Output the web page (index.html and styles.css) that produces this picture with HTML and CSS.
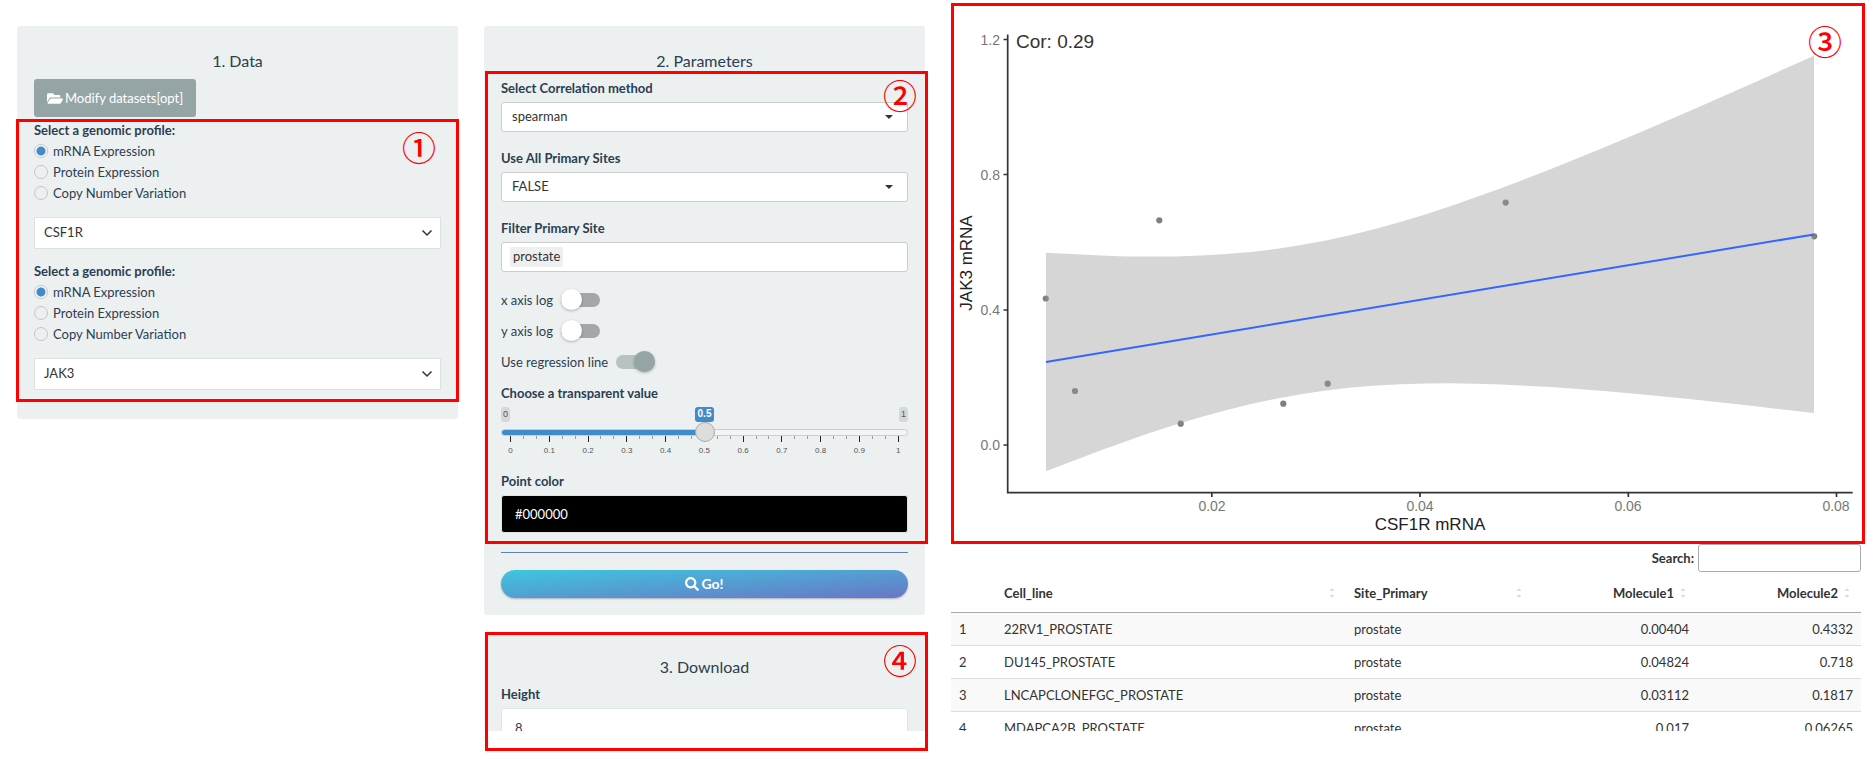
FILE: index.html
```html
<!DOCTYPE html>
<html lang="en">
<head>
<meta charset="utf-8">
<title>Correlation analysis</title>
<link rel="stylesheet" href="styles.css">
</head>
<body>
<main class="page">
  <div class="column">
    <section class="panel">
      <h2 class="panel-title">1. Data</h2>
      <button class="btn-modify" type="button">
        <svg width="16" height="13" viewBox="0 0 576 448" fill="currentColor" aria-hidden="true"><path d="M572.7 260.100L500.300 384.200A64 64 0 0 1 445 416H45.000c-18.500 0-30-20.100-20.700-36.100l72.400-124.100A64 64 0 0 1 152 224H552c18.500 0 30 20.100 20.700 36.100zM152 192h328v-48c0-26.500-21.500-48-48-48H272l-64-64H48C21.500 32 0 53.500 0 80v278l69-118.300C86.300 210.300 118 192 152 192z"/></svg>
        <span>Modify datasets[opt]</span>
      </button>
      <div class="marked profiles">
        <fieldset class="profile">
          <legend class="label">Select a genomic profile:</legend>
          <label class="radio"><input type="radio" name="profile1" checked><span>mRNA Expression</span></label>
          <label class="radio"><input type="radio" name="profile1"><span>Protein Expression</span></label>
          <label class="radio"><input type="radio" name="profile1"><span>Copy Number Variation</span></label>
        </fieldset>
        <div class="select gene">
          <select aria-label="First gene"><option>CSF1R</option></select>
          <svg class="chevron" width="12" height="8" viewBox="0 0 12 8" aria-hidden="true"><path d="M1.500 1.500L6 6l4.500-4.500" fill="none" stroke="#333" stroke-width="1.500"/></svg>
        </div>
        <fieldset class="profile">
          <legend class="label">Select a genomic profile:</legend>
          <label class="radio"><input type="radio" name="profile2" checked><span>mRNA Expression</span></label>
          <label class="radio"><input type="radio" name="profile2"><span>Protein Expression</span></label>
          <label class="radio"><input type="radio" name="profile2"><span>Copy Number Variation</span></label>
        </fieldset>
        <div class="select gene">
          <select aria-label="Second gene"><option>JAK3</option></select>
          <svg class="chevron" width="12" height="8" viewBox="0 0 12 8" aria-hidden="true"><path d="M1.500 1.500L6 6l4.500-4.500" fill="none" stroke="#333" stroke-width="1.500"/></svg>
        </div>
        <div class="frame frame-data"><span class="badge">①</span></div>
      </div>
    </section>
  </div>

  <div class="column">
    <section class="panel">
      <h2 class="panel-title">2. Parameters</h2>
      <div class="marked">
        <label class="label" for="method">Select Correlation method</label>
        <div class="select field">
          <select id="method"><option>spearman</option></select>
          <svg class="caret" width="8" height="4" viewBox="0 0 8 4" aria-hidden="true"><path d="M0 0h8L4 4z" fill="#333"/></svg>
        </div>
        <label class="label" for="all-sites">Use All Primary Sites</label>
        <div class="select field">
          <select id="all-sites"><option>FALSE</option></select>
          <svg class="caret" width="8" height="4" viewBox="0 0 8 4" aria-hidden="true"><path d="M0 0h8L4 4z" fill="#333"/></svg>
        </div>
        <label class="label" for="site">Filter Primary Site</label>
        <div class="tags"><span class="tag">prostate</span><input id="site" type="text"></div>
        <div class="switches">
          <label class="switch"><span>x axis log</span><input type="checkbox"></label>
          <label class="switch"><span>y axis log</span><input type="checkbox"></label>
          <label class="switch"><span>Use regression line</span><input type="checkbox" checked></label>
        </div>
        <label class="label" for="alpha">Choose a transparent value</label>
        <div class="slider">
          <div class="slider-values"><span>0</span><output class="current" for="alpha">0.5</output><span>1</span></div>
          <input id="alpha" type="range" min="0" max="1" step="0.1" value="0.5">
          <div class="ticks" aria-hidden="true">
            <i><b>0</b></i><i></i><i></i><i><b>0.1</b></i><i></i><i></i><i><b>0.2</b></i><i></i><i></i><i><b>0.3</b></i><i></i><i></i><i><b>0.4</b></i><i></i><i></i><i><b>0.5</b></i><i></i><i></i><i><b>0.6</b></i><i></i><i></i><i><b>0.7</b></i><i></i><i></i><i><b>0.8</b></i><i></i><i></i><i><b>0.9</b></i><i></i><i></i><i><b>1</b></i>
          </div>
        </div>
        <label class="label" for="color">Point color</label>
        <input class="color" id="color" type="text" value="#000000">
        <div class="frame frame-params"><span class="badge">②</span></div>
      </div>
      <hr class="rule">
      <button class="btn-go" type="button">
        <svg width="14" height="14" viewBox="0 0 512 512" fill="currentColor" aria-hidden="true"><path d="M505 442.700L405.300 343c-4.500-4.500-10.600-7-17-7H372c27.600-35.300 44-79.700 44-128C416 93.100 322.900 0 208 0S0 93.100 0 208s93.100 208 208 208c48.300 0 92.700-16.400 128-44v16.300c0 6.400 2.500 12.500 7 17l99.700 99.700c9.400 9.400 24.600 9.400 33.900 0l28.300-28.300c9.400-9.400 9.400-24.600.1-34zM208 336c-70.700 0-128-57.200-128-128 0-70.700 57.200-128 128-128 70.700 0 128 57.200 128 128 0 70.700-57.200 128-128 128z"/></svg>
        <span>Go!</span>
      </button>
    </section>
    <section class="panel marked">
      <h2 class="panel-title">3. Download</h2>
      <label class="label" for="height">Height</label>
      <input class="number" id="height" type="text" inputmode="numeric" value="8">
      <div class="frame frame-download"><span class="badge">④</span></div>
    </section>
  </div>

  <div class="column results">
    <div class="marked">
      <svg class="plot" viewBox="0 0 910 541" role="img" aria-label="Scatter plot of JAK3 mRNA against CSF1R mRNA">
        <g fill="#000" fill-opacity=".5">
          <circle cx="94.800" cy="298.500" r="3.100"/><circle cx="124" cy="391" r="3.100"/><circle cx="208.300" cy="220.300" r="3.100"/><circle cx="229.700" cy="423.700" r="3.100"/><circle cx="332.300" cy="403.700" r="3.100"/><circle cx="376.700" cy="383.700" r="3.100"/><circle cx="554.700" cy="202.500" r="3.100"/><circle cx="863.200" cy="236.300" r="3.100"/>
        </g>
        <path fill="#999" fill-opacity=".4" d="M95 252.800L150 255.600 175 256.400 200 256.600 225 256.400 250 255.600 275 254.100 300 251.900 325 248.900 350 245 375 240.400 400 235 425 228.800 450 221.800 475 214.200 500 206.100 550 188.300 600 169.100 650 148.800 700 127.800 750 106.100 800 84 863 55.700V413.100L800 405.800 750 400.300 700 395.200 650 390.800 600 387.100 550 384.500 525 383.700 500 383.300 475 383.500 450 384.200 425 385.500 400 387.600 375 390.500 350 394.200 325 398.700 300 404.100 275 410.200 250 417 225 424.500 200 432.600 150 450.200 95 471.200z"/>
        <path d="M95 362L863 234.400" stroke="#36f" stroke-width="2"/>
        <g stroke="#333" stroke-width="1.700" fill="none">
          <path d="M56.700 34.500V492.700H901.700"/>
          <path d="M52.500 39.500h4M52.500 174.500h4M52.500 310h4M52.500 445h4M260.800 493v4M469 493v4M677.300 493v4M885.500 493v4"/>
        </g>
        <g class="axis-value" text-anchor="end">
          <text x="49" y="45">1.2</text><text x="49" y="180">0.8</text><text x="49" y="315">0.4</text><text x="49" y="450">0.0</text>
        </g>
        <g class="axis-value" text-anchor="middle">
          <text x="261" y="511">0.02</text><text x="469" y="511">0.04</text><text x="677" y="511">0.06</text><text x="885" y="511">0.08</text>
        </g>
        <text class="axis-title" x="479" y="530" text-anchor="middle">CSF1R mRNA</text>
        <text class="axis-title" transform="translate(21 263) rotate(-90)" text-anchor="middle">JAK3 mRNA</text>
        <text class="plot-note" x="65" y="48">Cor: 0.29</text>
      </svg>
      <div class="frame frame-plot"><span class="badge">③</span></div>
    </div>
    <div class="search"><label for="search">Search:</label><input id="search" type="search"></div>
    <table class="table">
      <colgroup><col class="c-index"><col><col class="c-site"><col class="c-mol"><col class="c-mol"></colgroup>
      <thead>
        <tr>
          <th></th>
          <th><button type="button">Cell_line<svg width="6" height="10" viewBox="0 0 6 10" aria-hidden="true"><path d="M3 0l2.500 3h-5zM3 10l2.500-3h-5z"/></svg></button></th>
          <th><button type="button">Site_Primary<svg width="6" height="10" viewBox="0 0 6 10" aria-hidden="true"><path d="M3 0l2.500 3h-5zM3 10l2.500-3h-5z"/></svg></button></th>
          <th class="num"><button type="button">Molecule1<svg width="6" height="10" viewBox="0 0 6 10" aria-hidden="true"><path d="M3 0l2.500 3h-5zM3 10l2.500-3h-5z"/></svg></button></th>
          <th class="num"><button type="button">Molecule2<svg width="6" height="10" viewBox="0 0 6 10" aria-hidden="true"><path d="M3 0l2.500 3h-5zM3 10l2.500-3h-5z"/></svg></button></th>
        </tr>
      </thead>
      <tbody>
        <tr><td>1</td><td>22RV1_PROSTATE</td><td>prostate</td><td class="num">0.00404</td><td class="num">0.4332</td></tr>
        <tr><td>2</td><td>DU145_PROSTATE</td><td>prostate</td><td class="num">0.04824</td><td class="num">0.718</td></tr>
        <tr><td>3</td><td>LNCAPCLONEFGC_PROSTATE</td><td>prostate</td><td class="num">0.03112</td><td class="num">0.1817</td></tr>
        <tr><td>4</td><td>MDAPCA2B_PROSTATE</td><td>prostate</td><td class="num">0.017</td><td class="num">0.06265</td></tr>
      </tbody>
    </table>
  </div>
</main>
<div class="page-end"></div>
</body>
</html>
```
FILE: styles.css
```css
*, *::before, *::after { box-sizing: border-box; }

body {
  margin: 0;
  height: 100vh;
  overflow: hidden;
  background: #fff;
  color: #2c3e50;
  font: 13px/20px Lato, "Liberation Sans", sans-serif;
}

input, select, button { margin: 0; font: inherit; color: inherit; }

.page {
  display: grid;
  grid-template-columns: 441fr 441fr 910fr;
  gap: 26px;
  padding: 0 12px 0 17px;
  align-items: start;
}

.page-end {
  position: fixed;
  inset: auto 0 0;
  height: 29px;
  background: #fff;
}

.column { min-width: 0; padding-top: 26px; }
.results { padding-top: 0; color: #333; }

.panel {
  padding: 25px 17px 17px;
  margin-bottom: 17px;
  background: #ecf0f1;
  border-radius: 3px;
}

.panel-title {
  margin: 0 0 7px;
  font-size: 16px;
  font-weight: 400;
  line-height: 20px;
  text-align: center;
}

.label { display: block; padding: 0; font-weight: 700; }
.marked { position: relative; }

/* Numbered highlight frames */
.frame {
  position: absolute;
  z-index: 2;
  border: 3px solid #f00;
  pointer-events: none;
}
.frame-data { inset: -1px -18px -12px; }
.frame-params { inset: -7px -20px -11px -16px; }
.frame-download { inset: 0 -3px auto 1px; height: 119px; }
.frame-plot { inset: 3px -4px -3px 0; }

.badge {
  position: absolute;
  top: 8px;
  right: 8px;
  color: #f00;
  font: 500 34px/34px "Noto Sans CJK JP", sans-serif;
}
.frame-data .badge, .frame-plot .badge { right: 20px; }
.frame-plot .badge { top: 18px; }
.frame-params .badge { top: 4px; }

/* Data panel */
.btn-modify {
  display: flex;
  align-items: center;
  gap: 2px;
  height: 38px;
  margin: 8px 0 3px;
  padding: 0 13px;
  border: 0;
  border-radius: 3px;
  background: #95a5a6;
  color: #fff;
  font-size: 14px;
}
.panel-title:has(+ .btn-modify) { margin-bottom: 0; }
.btn-modify span { font-size: 13px; }
.profiles { margin-bottom: 12px; }
.profile { min-width: 0; margin: 0; padding: 0 0 14px; border: 0; }
.radio { display: flex; align-items: center; gap: 5px; height: 21px; }
.radio input {
  appearance: none;
  width: 14px;
  height: 14px;
  border: 1px solid #c3c7c8;
  border-radius: 50%;
}
.radio input:checked { background: radial-gradient(circle, #428bca 0 4px, #f7f9fa 5px); }

.select { position: relative; display: flex; }
.select select {
  appearance: none;
  width: 100%;
  height: 30px;
  padding: 0 24px 2px 10px;
  border: 1px solid #ccc;
  border-radius: 3px;
  background: #fff;
  color: #333;
}
.select svg { position: absolute; top: 50%; right: 15px; translate: 0 -50%; pointer-events: none; }
.gene { margin-bottom: 12px; }
.gene select { height: 32px; padding-left: 9px; border-color: #dee1e2; border-radius: 0; }
.select .chevron { right: 8px; }

/* Parameters panel */
.field, .tags { margin: 4px 0 16px; }
.tags {
  display: flex;
  height: 30px;
  margin-bottom: 12px;
  padding: 4px 8px;
  border: 1px solid #ccc;
  border-radius: 3px;
  background: #fff;
}
.tag { padding: 0 3px; border-radius: 2px; background: #efefef; color: #333; line-height: 19px; height: 20px; }
.tags input { flex: 1; min-width: 0; border: 0; outline: 0; background: none; }

.switches { margin-bottom: 6px; }
.switch { display: flex; align-items: center; gap: 8px; height: 31px; }
.switch input {
  appearance: none;
  display: flex;
  align-items: center;
  width: 39px;
  height: 14px;
  border-radius: 7px;
  background: #a3a7a8;
}
.switch input::before {
  content: "";
  width: 21px;
  height: 21px;
  flex: none;
  border-radius: 50%;
  background: #fff;
  box-shadow: 0 1px 3px #0004;
}
.switch input:checked { justify-content: flex-end; background: #b8c2c3; }
.switch input:checked::before { background: #95a5a6; }

.slider { padding-top: 4px; height: 68px; font-family: "Liberation Sans", Arial, sans-serif; }
.slider-values { display: flex; justify-content: space-between; height: 15px; font-size: 9px; line-height: 14px; }
.slider-values span { min-width: 9px; padding: 0 2px; border-radius: 3px; background: #d5d8d9; color: #555; text-align: center; }
.slider-values .current { padding: 0 3px; border-radius: 3px; background: #428bca; color: #fff; font-weight: 700; font-size: 10px; line-height: 14px; }
.slider input {
  position: relative;
  z-index: 1;
  display: block;
  appearance: none;
  width: 100%;
  height: 20px;
  background: none;
}
.slider input::-webkit-slider-runnable-track {
  height: 7px;
  border: 1px solid #ccc;
  border-radius: 4px;
  background: linear-gradient(90deg, #428bca 50%, #f4f4f4 50%) border-box;
}
.slider input::-webkit-slider-thumb {
  appearance: none;
  width: 20px;
  height: 20px;
  margin-top: -8px;
  border: 1px solid #aaa;
  border-radius: 50%;
  background: #ddd;
}
.ticks { display: flex; justify-content: space-between; margin-top: -6px; padding: 0 9px; }
.ticks i { width: 1px; height: 3px; background: #999; font-style: normal; }
.ticks i:nth-child(3n + 1) { display: flex; justify-content: center; height: 6px; background: #222; }
.ticks b { padding-top: 9px; font-size: 8px; line-height: 12px; font-weight: 400; color: #555; }

.color, .number {
  display: block;
  width: 100%;
  height: 38px;
  margin-top: 4px;
  padding: 0 13px;
  border: 1px solid #dce4ec;
  border-radius: 3px;
  background: #fff;
}
.color { background: #000; color: #fff; }
.number { height: 40px; }

.rule { height: 1px; margin: 19px 0 17px; border: 0; background: #5f80bb; }
.btn-go {
  display: flex;
  align-items: center;
  justify-content: center;
  gap: 2px;
  width: 100%;
  height: 28px;
  border: 0;
  border-radius: 14px;
  background: linear-gradient(to bottom right, #3cc8de, #6a75c6);
  box-shadow: 0 1px 2px #0004;
  color: #fff;
  font-size: 14px;
  font-weight: 700;
}

/* Plot */
.plot { display: block; width: 100%; height: auto; font-family: "Liberation Sans", Arial, sans-serif; }
.axis-value { font-size: 14px; fill: #777; }
.axis-title { font-size: 17px; fill: #222; }
.plot-note { font-size: 19px; fill: #333; }

/* Result table */
.search { display: flex; align-items: center; justify-content: flex-end; gap: 4px; margin: 3px 0; font-weight: 700; }
.search input { width: 163px; height: 28px; border: 1px solid #aaa; border-radius: 3px; background: none; }

.table { width: 100%; border-collapse: collapse; table-layout: fixed; }
.c-index { width: 45px; }
.c-site { width: 187px; }
.c-mol { width: 164px; }
.table th { height: 37px; padding: 0; border-bottom: 1px solid #aaa; }
.table th button {
  display: flex;
  align-items: center;
  justify-content: space-between;
  gap: 6px;
  width: 100%;
  padding: 0 11px 0 8px;
  border: 0;
  background: none;
  font-weight: 700;
}
.table th.num button { justify-content: flex-end; }
.table th svg { fill: #ddd; }
.table td { height: 33px; padding: 0 8px; border-bottom: 1px solid #ddd; }
.table tbody tr:nth-child(odd) { background: #f9f9f9; }
.num { text-align: right; }
```
